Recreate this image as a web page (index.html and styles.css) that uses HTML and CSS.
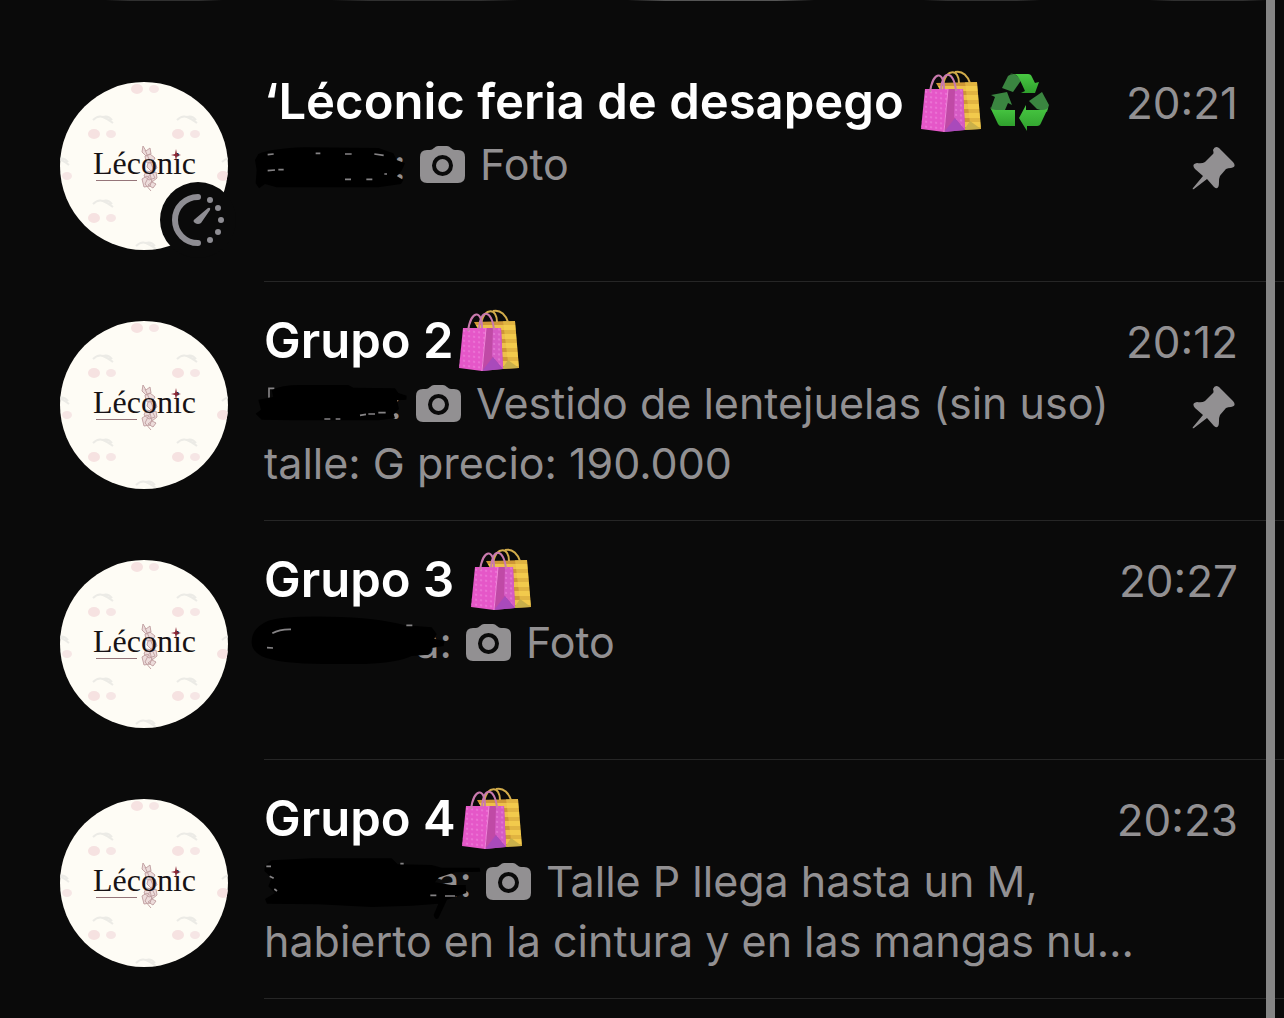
FILE: index.html
```html
<!DOCTYPE html>
<html lang="es">
<head>
<meta charset="utf-8">
<meta name="viewport" content="width=device-width, initial-scale=1">
<title>Chats</title>
<link rel="stylesheet" href="styles.css">
</head>
<body>
<svg class="defs" aria-hidden="true">
  <defs>
    <pattern id="dots" width="5" height="5" patternUnits="userSpaceOnUse" patternTransform="skewY(6)">
      <circle cx="2" cy="2" r="0.8" fill="#f59ae6"/>
    </pattern>
    <pattern id="stripes" width="12" height="9" patternUnits="userSpaceOnUse">
      <rect width="12" height="9" fill="#eec04a"/><rect y="4" width="12" height="4" fill="#cf9736"/>
    </pattern>
    <linearGradient id="leaf" x1="0" y1="0" x2="0" y2="1">
      <stop offset="0" stop-color="#49c943"/><stop offset="1" stop-color="#2fa02d"/>
    </linearGradient>
    <clipPath id="round"><circle cx="84" cy="84" r="84"/></clipPath>
    <g id="cherry">
      <ellipse cx="0" cy="19" rx="6" ry="5" fill="#f6e2e1"/><ellipse cx="17" cy="19" rx="5" ry="4" fill="#f6e6e5"/>
      <path d="M-1 5Q4 0 9 2T19 8M9 2Q14 0 18 5" fill="none" stroke="#ecebe6" stroke-width="2"/>
    </g>
    <symbol id="avatar" viewBox="0 0 168 168">
      <g clip-path="url(#round)">
        <rect width="168" height="168" fill="#fefcf5"/>
        <use href="#cherry" x="34" y="33"/><use href="#cherry" x="118" y="33"/>
        <use href="#cherry" x="34" y="117"/><use href="#cherry" x="118" y="117"/>
        <use href="#cherry" x="77" y="-12"/><use href="#cherry" x="77" y="159"/>
        <use href="#cherry" x="-10" y="75"/><use href="#cherry" x="163" y="75"/>
        <g fill="#eddcdb" stroke="#c3a3a4" stroke-width="1">
          <path d="M83 64l3 5 4-3 1 6-5 2-4-4zM85 74l5-2 5 4-3 5-6-1zM88 81l7-1 2 6-6 3-4-4zM86 89l6 1 3 6-6 2-5-4zM82 97l5-3 5 4-2 6-6 1zM90 92l6-2 1 6-5 4zM88 103l4-3 4 2-3 4z"/>
          <path fill="none" d="M85 68l8 18-8 16 6 7"/>
        </g>
        <text class="brand" x="33" y="92">Léconic</text>
        <path d="M116 67l1 5 4 1-4 1-1 5-1-5-4-1 4-1z" fill="#8c2634"/>
        <path d="M36 98.500h41" stroke="#957579"/>
      </g>
    </symbol>
    <symbol id="bags" viewBox="0 0 64 64">
      <path d="M17 14L58 13 62 60 44 61z" fill="url(#stripes)"/>
      <path d="M46 13h12l4 47-11-6z" fill="#f6d64f" opacity=".45"/>
      <path d="M45 61l6-9 11 8z" fill="#c9b04a"/>
      <path d="M24 15C28-1 40 0 40 14M36 3C44 1 49 8 51 14" fill="none" stroke="#d2ac4b" stroke-width="2"/>
      <path d="M6 20H29L25 63 2 60z" fill="#e557c8"/>
      <path d="M6 20H29L25 63 2 60z" fill="url(#dots)"/>
      <path d="M29 20H44L46 61 25 63z" fill="#c04aa6"/>
      <path d="M36 20h8l2 41-11-13z" fill="#d65bc4"/><path d="M36 20h8l2 41-11-13z" fill="url(#dots)"/>
      <path d="M25 63l11-14 10 12z" fill="#a94abb"/>
      <path d="M29 20L25 63" stroke="#f384dc"/>
      <path d="M11 23C14 2 25 1 25 20M22 21C23 0 35 1 37 22" fill="none" stroke="#c97aae" stroke-width="2"/>
    </symbol>
    <symbol id="recycle" viewBox="0 0 62 62">
      <path d="M14 18L20 6Q22 4 26 4L34 9 25 22z" fill="#3a8540"/>
      <path d="M3 25L19 22 24 35 20 33 17 40H5L3 38 7 27z" fill="#3a8540"/>
      <path d="M41 31L54 22 61 35 59 42 49 39z" fill="#3a8540"/>
      <path d="M22 4H40Q43 4 44 7L47 13 51 12 47 23H33L37 21 31 8Q28 3 22 4z" fill="url(#leaf)"/>
      <path d="M2 37Q4 40 8 40H27V56H13Q11 56 10 54z" fill="url(#leaf)"/>
      <path d="M38 35V40H54Q60 40 61 36L53 53Q52 56 49 56H39V61L31 48z" fill="url(#leaf)"/>
    </symbol>
    <symbol id="camera" viewBox="0 0 45 37">
      <path fill="currentColor" fill-rule="evenodd" d="M7 4H10Q12 4 14 2T18 0H27Q29 0 31 2T35 4H38Q45 4 45 11V30Q45 37 38 37H7Q0 37 0 30V11Q0 4 7 4zM22.500 9a10.500 10.500 0 1 0 0 21a10.500 10.500 0 1 0 0-21zM22.500 13a6.500 6.500 0 1 1 0 13a6.500 6.500 0 1 1 0-13z"/>
    </symbol>
    <symbol id="pin" viewBox="0 0 46 44">
      <path fill="currentColor" d="M29 2L43 16Q47 21 41 22Q38 22 36 23L30 30Q29 32 29 36Q29 45 24 41L17 33 4 43Q2 44 3 42L13 30 5 23Q1 18 7 17Q12 18 15 16L23 8Q24 7 23 4Q25-1 29 2z"/>
    </symbol>
  </defs>
</svg>

<div class="tabs-edge" aria-hidden="true"><i></i><i></i><i></i><i></i><i></i></div>

<main class="chats">
  <article class="chat">
    <div class="photo">
      <svg class="avatar" role="img" aria-label="Léconic"><use href="#avatar"/></svg>
      <svg class="timer" viewBox="0 0 76 76" aria-hidden="true">
        <circle cx="38" cy="38" r="38" fill="#0a0a0a"/>
        <path d="M38 15A23 23 0 1 0 38 61" fill="none" stroke="#8e8d93" stroke-width="6" stroke-linecap="round"/>
        <g fill="#8e8d93"><circle cx="50" cy="18" r="3"/><circle cx="58" cy="26" r="3"/><circle cx="61" cy="38" r="3"/><circle cx="58" cy="50" r="3"/><circle cx="50" cy="58" r="3"/>
        <path d="M35 37L48 26Q51 25 50 28L41 41Q38 43 35 41T35 37z"/></g>
      </svg>
    </div>
    <div class="body">
      <h2 class="name">‘Léconic feria de desapego<svg class="emoji spaced"><use href="#bags"/></svg><svg class="emoji recycle"><use href="#recycle"/></svg></h2>
      <p class="preview"><span class="sender s1">:<svg class="scribble" viewBox="0 0 720 240" aria-hidden="true">
        <path d="M40 42Q80 25 180 22L400 24 445 40 455 60 480 70 470 92 455 108 475 120 468 132 400 142H95L60 132 42 145 32 130 35 90 30 60z"/>
        <path class="trace" d="M68 44l18-2M212 40h14M300 42h20M388 42l28 4M68 92l22-2M100 89h16M300 118h18M364 118h18M418 102h8"/></svg></span><svg class="camera"><use href="#camera"/></svg>Foto</p>
    </div>
    <div class="meta"><time>20:21</time><svg class="pin" role="img" aria-label="Fijado"><use href="#pin"/></svg></div>
  </article>

  <article class="chat">
    <div class="photo"><svg class="avatar" role="img" aria-label="Léconic"><use href="#avatar"/></svg></div>
    <div class="body">
      <h2 class="name">Grupo 2<svg class="emoji"><use href="#bags"/></svg></h2>
      <p class="preview"><span class="sender s2">:<svg class="scribble" viewBox="0 0 720 240" aria-hidden="true">
        <path class="trace" d="M72 56V28H88"/>
        <path d="M80 34Q110 16 180 18H310L325 26 450 28 460 42 485 50 484 62 456 64 462 90 446 105 450 118 400 124H140L50 122 32 104 48 92 40 62 85 54z"/>
        <path class="trace" d="M238 120h18M272 120h14M345 109l18-3M370 105h20M400 101h22"/></svg></span><svg class="camera"><use href="#camera"/></svg>Vestido de lentejuelas (sin uso)<br>talle: G precio: 190.000</p>
    </div>
    <div class="meta"><time>20:12</time><svg class="pin" role="img" aria-label="Fijado"><use href="#pin"/></svg></div>
  </article>

  <article class="chat">
    <div class="photo"><svg class="avatar" role="img" aria-label="Léconic"><use href="#avatar"/></svg></div>
    <div class="body">
      <h2 class="name">Grupo 3<svg class="emoji spaced"><use href="#bags"/></svg></h2>
      <p class="preview"><span class="sender s3">a:<svg class="scribble" viewBox="0 0 720 240" aria-hidden="true">
        <path d="M20 75Q18 30 70 8Q120-6 250-4Q400-2 480 22L560 28 575 48 568 62 598 70 596 84 560 90 550 110 500 114Q460 134 360 138H240Q100 138 50 115Q22 100 20 75z"/>
        <path class="trace" d="M82 46Q104 33 138 34M66 89l18 1M484 22h18"/></svg></span><svg class="camera"><use href="#camera"/></svg>Foto</p>
    </div>
    <div class="meta"><time>20:27</time></div>
  </article>

  <article class="chat">
    <div class="photo"><svg class="avatar" role="img" aria-label="Léconic"><use href="#avatar"/></svg></div>
    <div class="body">
      <h2 class="name">Grupo 4<svg class="emoji"><use href="#bags"/></svg></h2>
      <p class="preview"><span class="sender s4">a:<svg class="scribble" viewBox="0 0 720 240" aria-hidden="true">
        <path d="M80 10L200 4H440L458 22 560 24 590 32 704 32 706 44 630 46 580 62 570 76 620 84 662 84 664 108 606 128 580 184Q570 190 566 174L580 140 500 146 380 150 220 142 66 140 60 126 90 108 70 88 80 62 58 42 60 28z"/>
        <path class="trace" d="M64 28h14M74 58l12 6M88 96l8 6M466 20h10M556 115h18M600 117h30"/></svg></span><svg class="camera"><use href="#camera"/></svg>Talle P llega hasta un M,<br>habierto en la cintura y en las mangas nu…</p>
    </div>
    <div class="meta"><time>20:23</time></div>
  </article>
</main>
<div class="scrollbar" aria-hidden="true"></div>
</body>
</html>
```
FILE: styles.css
```css
* { box-sizing: border-box; }
body {
  margin: 0;
  min-height: 100vh;
  background: #0a0a0a;
  color: #929092;
  font-family: Inter, "Liberation Sans", sans-serif;
  font-size: 44px;
  line-height: 60px;
  overflow-x: hidden;
}
.defs { position: absolute; width: 0; height: 0; }
.brand { font: 32px "Liberation Serif", serif; fill: #171214; }

.tabs-edge {
  display: flex;
  justify-content: space-between;
  height: 1px;
  padding: 0 18px 0 106px;
}
.tabs-edge i { width: 10%; background: linear-gradient(90deg, #0a0a0a, #303030 20%, #303030 80%, #0a0a0a); }
.tabs-edge i:nth-child(2), .tabs-edge i:nth-child(3) { width: 16%; }
.tabs-edge i:nth-child(3) { background: linear-gradient(90deg, #0a0a0a, #555 20%, #555 80%, #0a0a0a); }

.chats { padding: 42px 0 19px; }
.chat {
  display: flex;
  min-height: 239px;
  padding: 0 46px 0 60px;
  position: relative;
}
.chat::after {
  content: "";
  position: absolute;
  left: 264px;
  right: 0;
  bottom: 0;
  height: 1px;
  background: #262626;
}
.photo {
  position: relative;
  flex: none;
  width: 168px;
  height: 168px;
  margin: 39px 36px 0 0;
}
.avatar { display: block; width: 168px; height: 168px; }
.timer { position: absolute; left: 100px; top: 100px; width: 76px; height: 76px; }

.body { flex: 1; min-width: 0; padding-top: 27px; white-space: nowrap; }
.name {
  display: flex;
  align-items: center;
  margin: 0;
  color: #fff;
  font-size: 49px;
  font-weight: 600;
  line-height: 64px;
}
.emoji { flex: none; width: 64px; height: 64px; margin: -2px 0 0 4px; }
.spaced { margin-left: 15px; }
.recycle { width: 62px; height: 62px; margin-left: 5px; }

.preview { margin: 0; font-size: 43px; }
.sender {
  display: inline-block;
  position: relative;
  height: 60px;
  vertical-align: top;
  text-align: right;
}
.s1 { width: 142px; }
.s2 { width: 138px; }
.s3 { width: 188px; }
.s4 { width: 208px; }
.scribble { position: absolute; left: -19px; top: 6px; width: 240px; height: 80px; overflow: visible; }
.scribble path { fill: #000; }
.scribble .trace { fill: none; stroke: #858385; stroke-width: 5; }
.camera { width: 45px; height: 37px; margin: 0 15px 0 14px; vertical-align: -3px; }

.meta {
  flex: none;
  display: flex;
  flex-direction: column;
  align-items: flex-end;
  gap: 13px;
  padding-top: 30px;
}
.pin { width: 46px; height: 44px; margin-right: 2px; }

.scrollbar { position: fixed; top: 0; bottom: 0; right: 9px; width: 9px; background: #858585; }
```
